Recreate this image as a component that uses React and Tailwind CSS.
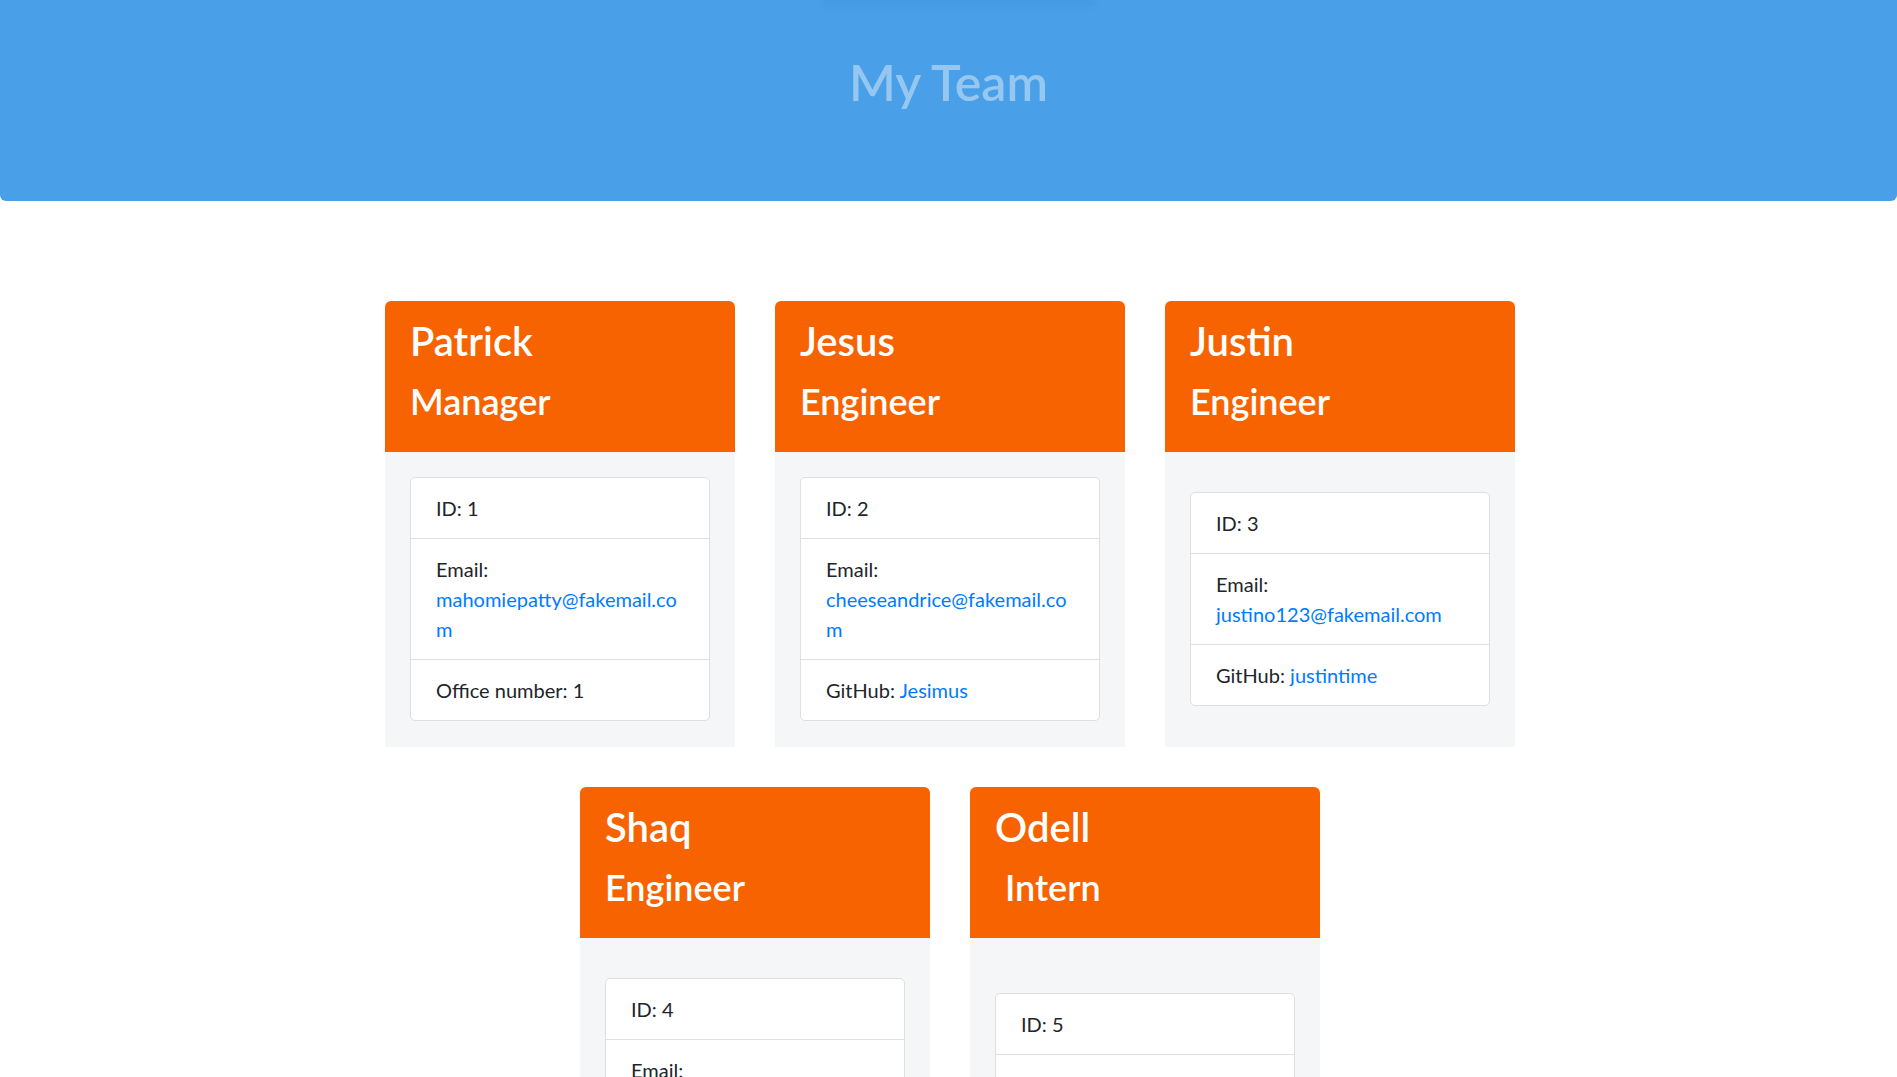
import React from 'react';

const team = [
  { name: 'Patrick', role: 'Manager', id: 1, email: 'mahomiepatty@fakemail.com', split: 24, extraLabel: 'Office number', extra: '1' },
  { name: 'Jesus', role: 'Engineer', id: 2, email: 'cheeseandrice@fakemail.com', split: 25, extraLabel: 'GitHub', extra: 'Jesimus', link: true },
  { name: 'Justin', role: 'Engineer', id: 3, email: 'justino123@fakemail.com', extraLabel: 'GitHub', extra: 'justintime', link: true },
  { name: 'Shaq', role: 'Engineer', id: 4, email: 'shaqdaddy@fakemail.com', extraLabel: 'GitHub', extra: 'bigdiesel', link: true },
  { name: 'Odell', role: 'Intern', id: 5, email: 'obj3@fakemail.com', inline: true, extraLabel: 'School', extra: 'LSU', indent: true },
];

const EmployeeCard = ({ person }) => {
  const { name, role, id, email, split, inline, extraLabel, extra, link, indent } = person;
  return (
    <div className="w-[350px] flex flex-col">
      {/* Header */}
      <div className="bg-[#f76300] rounded-t-[6px] px-[25px] pt-[16px] pb-[30px] text-white font-semibold">
        <h2 className="text-[40px] leading-[48px]">{name}</h2>
        <h3 className={`text-[36px] leading-[42px] mt-[15px] ${indent ? 'ml-[10px]' : ''}`}>{role}</h3>
      </div>

      {/* Body */}
      <div className="bg-[#f5f6f8] h-[295px] p-[25px] pt-[23px] flex flex-col justify-center">
        <ul className="bg-white border border-[#dfdfdf] rounded-[5px] text-[20px] leading-[30px] text-[#212529]">
          <li className="px-[25px] py-[15px] border-b border-[#dfdfdf]">ID: {id}</li>
          <li className="px-[25px] py-[15px] border-b border-[#dfdfdf] whitespace-nowrap">
            Email:{inline ? ' ' : <br />}
            <a href="#" className="text-[#007bff]">
              {split ? (
                <>
                  {email.slice(0, split)}
                  <br />
                  {email.slice(split)}
                </>
              ) : (
                email
              )}
            </a>
          </li>
          <li className="px-[25px] py-[15px]">
            {extraLabel}:{' '}
            {link ? <a href="#" className="text-[#007bff]">{extra}</a> : extra}
          </li>
        </ul>
      </div>
    </div>
  );
};

export default function App() {
  return (
    <div className="min-h-screen bg-white font-['Lato',sans-serif]">
      {/* Jumbotron */}
      <header className="relative h-[201px] bg-[#49a0e8] rounded-b-[6px] pt-[52px] text-center">
        <div className="absolute top-0 left-[823px] w-[272px] h-[8px] bg-gradient-to-b from-[#3f8fd8]/50 to-transparent blur-[2px]" />
        <h1 className="text-[50px] leading-[60px] font-semibold text-[#95c7f1]">My Team</h1>
      </header>

      {/* Team */}
      <main className="mx-auto mt-[100px] max-w-[1170px] pl-[3px] flex flex-wrap justify-center gap-[40px] pb-[60px]">
        {team.map((p) => (
          <EmployeeCard key={p.id} person={p} />
        ))}
      </main>
    </div>
  );
}
